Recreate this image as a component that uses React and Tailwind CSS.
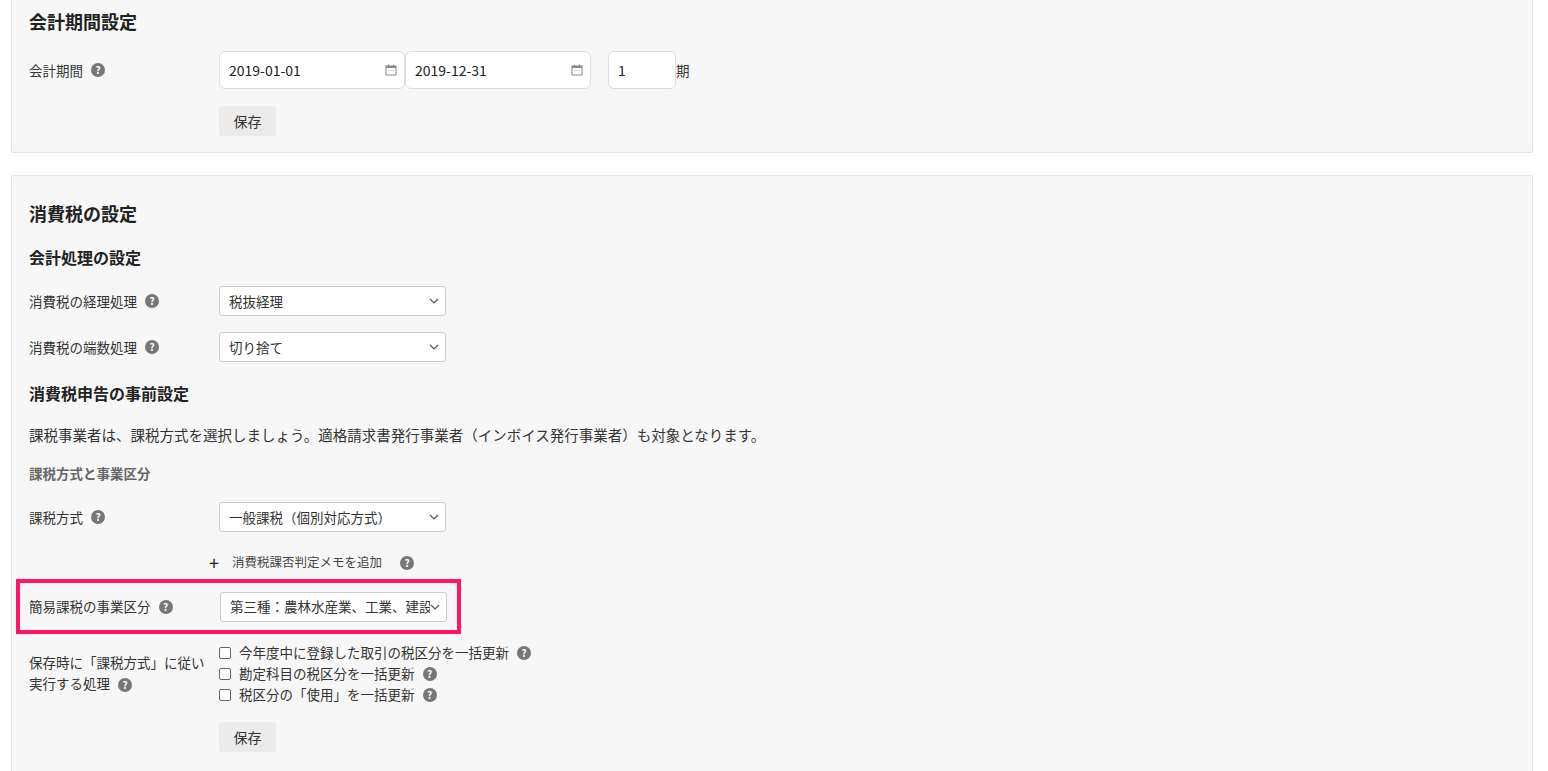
import React from "react";

const F = { fontFamily: '"Noto Sans CJK JP", "Noto Sans", sans-serif' };

const Help = () => (
  <span className="inline-flex items-center justify-center w-[14px] h-[14px] rounded-full bg-[#777] text-white text-[10px] font-bold leading-none ml-2 align-middle">?</span>
);

const Cal = () => (
  <svg width="12" height="12" viewBox="0 0 12 12" className="shrink-0">
    <rect x="1" y="2" width="10" height="9" fill="none" stroke="#888" strokeWidth="1" />
    <rect x="1" y="2" width="10" height="2" fill="#888" />
    <rect x="3" y="0.5" width="1" height="2" fill="#888" />
    <rect x="8" y="0.5" width="1" height="2" fill="#888" />
    <circle cx="4" cy="6.5" r="0.5" fill="#888" /><circle cx="6" cy="6.5" r="0.5" fill="#888" /><circle cx="8" cy="6.5" r="0.5" fill="#888" />
  </svg>
);

const Chev = () => (
  <svg width="10" height="6" viewBox="0 0 10 6"><path d="M1 1l4 4 4-4" fill="none" stroke="#555" strokeWidth="1.2" /></svg>
);

const Select = ({ v }) => (
  <div className="w-[227px] h-[30px] border border-[#ccc] rounded-[3px] bg-white flex items-center pl-[9px] pr-[6px] text-[13.5px] text-[#333]">
    <span className="flex-1 overflow-hidden whitespace-nowrap">{v}</span><Chev />
  </div>
);

const Row = ({ label, children, cls = "" }) => (
  <div className={"flex items-center " + cls}>
    <div className="w-[190px] text-[13.5px] text-[#333] flex items-center">{label}<Help /></div>
    {children}
  </div>
);

const Btn = () => (
  <div className="w-[57px] h-[30px] bg-[#ebebeb] rounded-[3px] flex items-center justify-center text-[14px] text-[#333]">保存</div>
);

const Chk = ({ t }) => (
  <div className="flex items-center h-[21px] text-[13.5px] text-[#333]">
    <span className="w-[12px] h-[12px] border border-[#666] rounded-[2px] bg-white mr-[8px] ml-[6px]" />{t}<Help />
  </div>
);

export default function App() {
  return (
    <div style={F} className="bg-white w-[1548px] h-[771px] overflow-hidden">
      <div className="mx-[11px] w-[1522px] bg-[#f7f7f7] border border-[#e3e3e3] border-t-0 rounded-b-[3px] px-[17px] pt-[8px] pb-[16px]">
        <div className="text-[18px] font-bold text-[#222] h-[30px]">会計期間設定</div>
        <div className="flex items-center mt-[13px]">
          <div className="w-[190px] text-[13.5px] text-[#333] flex items-center">会計期間<Help /></div>
          <div className="w-[186px] h-[38px] bg-white border border-[#ddd] rounded-[6px] flex items-center pl-[9px] pr-[7px] text-[14px] text-[#222]"><span className="flex-1">2019-01-01</span><Cal /></div>
          <div className="w-[186px] h-[38px] bg-white border border-[#ddd] rounded-[6px] flex items-center pl-[9px] pr-[7px] text-[14px] text-[#222]"><span className="flex-1">2019-12-31</span><Cal /></div>
          <div className="ml-[17px] w-[68px] h-[38px] bg-white border border-[#ddd] rounded-[6px] flex items-center pl-[9px] text-[14px] text-[#222]">1</div>
          <span className="text-[13.5px] text-[#333]">期</span>
        </div>
        <div className="ml-[190px] mt-[17px]"><Btn /></div>
      </div>

      <div className="mx-[11px] mt-[22px] w-[1522px] bg-[#f7f7f7] border border-[#e3e3e3] rounded-[3px] px-[17px] pt-[24px] h-[620px]">
        <div className="text-[18px] font-bold text-[#222] h-[26px]">消費税の設定</div>
        <div className="text-[16px] font-bold text-[#222] mt-[19px] h-[24px]">会計処理の設定</div>
        <Row label="消費税の経理処理" cls="mt-[17px]"><Select v="税抜経理" /></Row>
        <Row label="消費税の端数処理" cls="mt-[16px]"><Select v="切り捨て" /></Row>
        <div className="text-[16px] font-bold text-[#222] mt-[19px] h-[24px]">消費税申告の事前設定</div>
        <div className="text-[14.5px] text-[#333] mt-[19px] h-[20px]">課税事業者は、課税方式を選択しましょう。適格請求書発行事業者（インボイス発行事業者）も対象となります。</div>
        <div className="text-[13.5px] font-bold text-[#666] mt-[19px] h-[20px]">課税方式と事業区分</div>
        <Row label="課税方式" cls="mt-[19px]"><Select v="一般課税（個別対応方式）" /></Row>
        <div className="ml-[180px] mt-[15px] flex items-center text-[12.5px] text-[#444] h-[30px]">
          <span className="text-[18px] mr-[13px] text-[#222]">+</span>消費税課否判定メモを追加<span className="ml-[10px]"><Help /></span>
        </div>
        <div className="-ml-[13px] mt-[2px] w-[445px] h-[55px] border-[4px] border-[#ff1466] flex items-center pl-[9px]">
          <div className="w-[191px] text-[13.5px] text-[#333] flex items-center">簡易課税の事業区分<Help /></div>
          <Select v="第三種：農林水産業、工業、建設業" />
        </div>
        <div className="flex mt-[8px]">
          <div className="w-[184px] text-[13.5px] text-[#333] leading-[21px] pt-[10px] whitespace-nowrap">保存時に「課税方式」に従い<br />実行する処理<Help /></div>
          <div className="flex flex-col">
            <Chk t="今年度中に登録した取引の税区分を一括更新" />
            <Chk t="勘定科目の税区分を一括更新" />
            <Chk t="税区分の「使用」を一括更新" />
          </div>
        </div>
        <div className="ml-[190px] mt-[17px]"><Btn /></div>
      </div>
    </div>
  );
}
